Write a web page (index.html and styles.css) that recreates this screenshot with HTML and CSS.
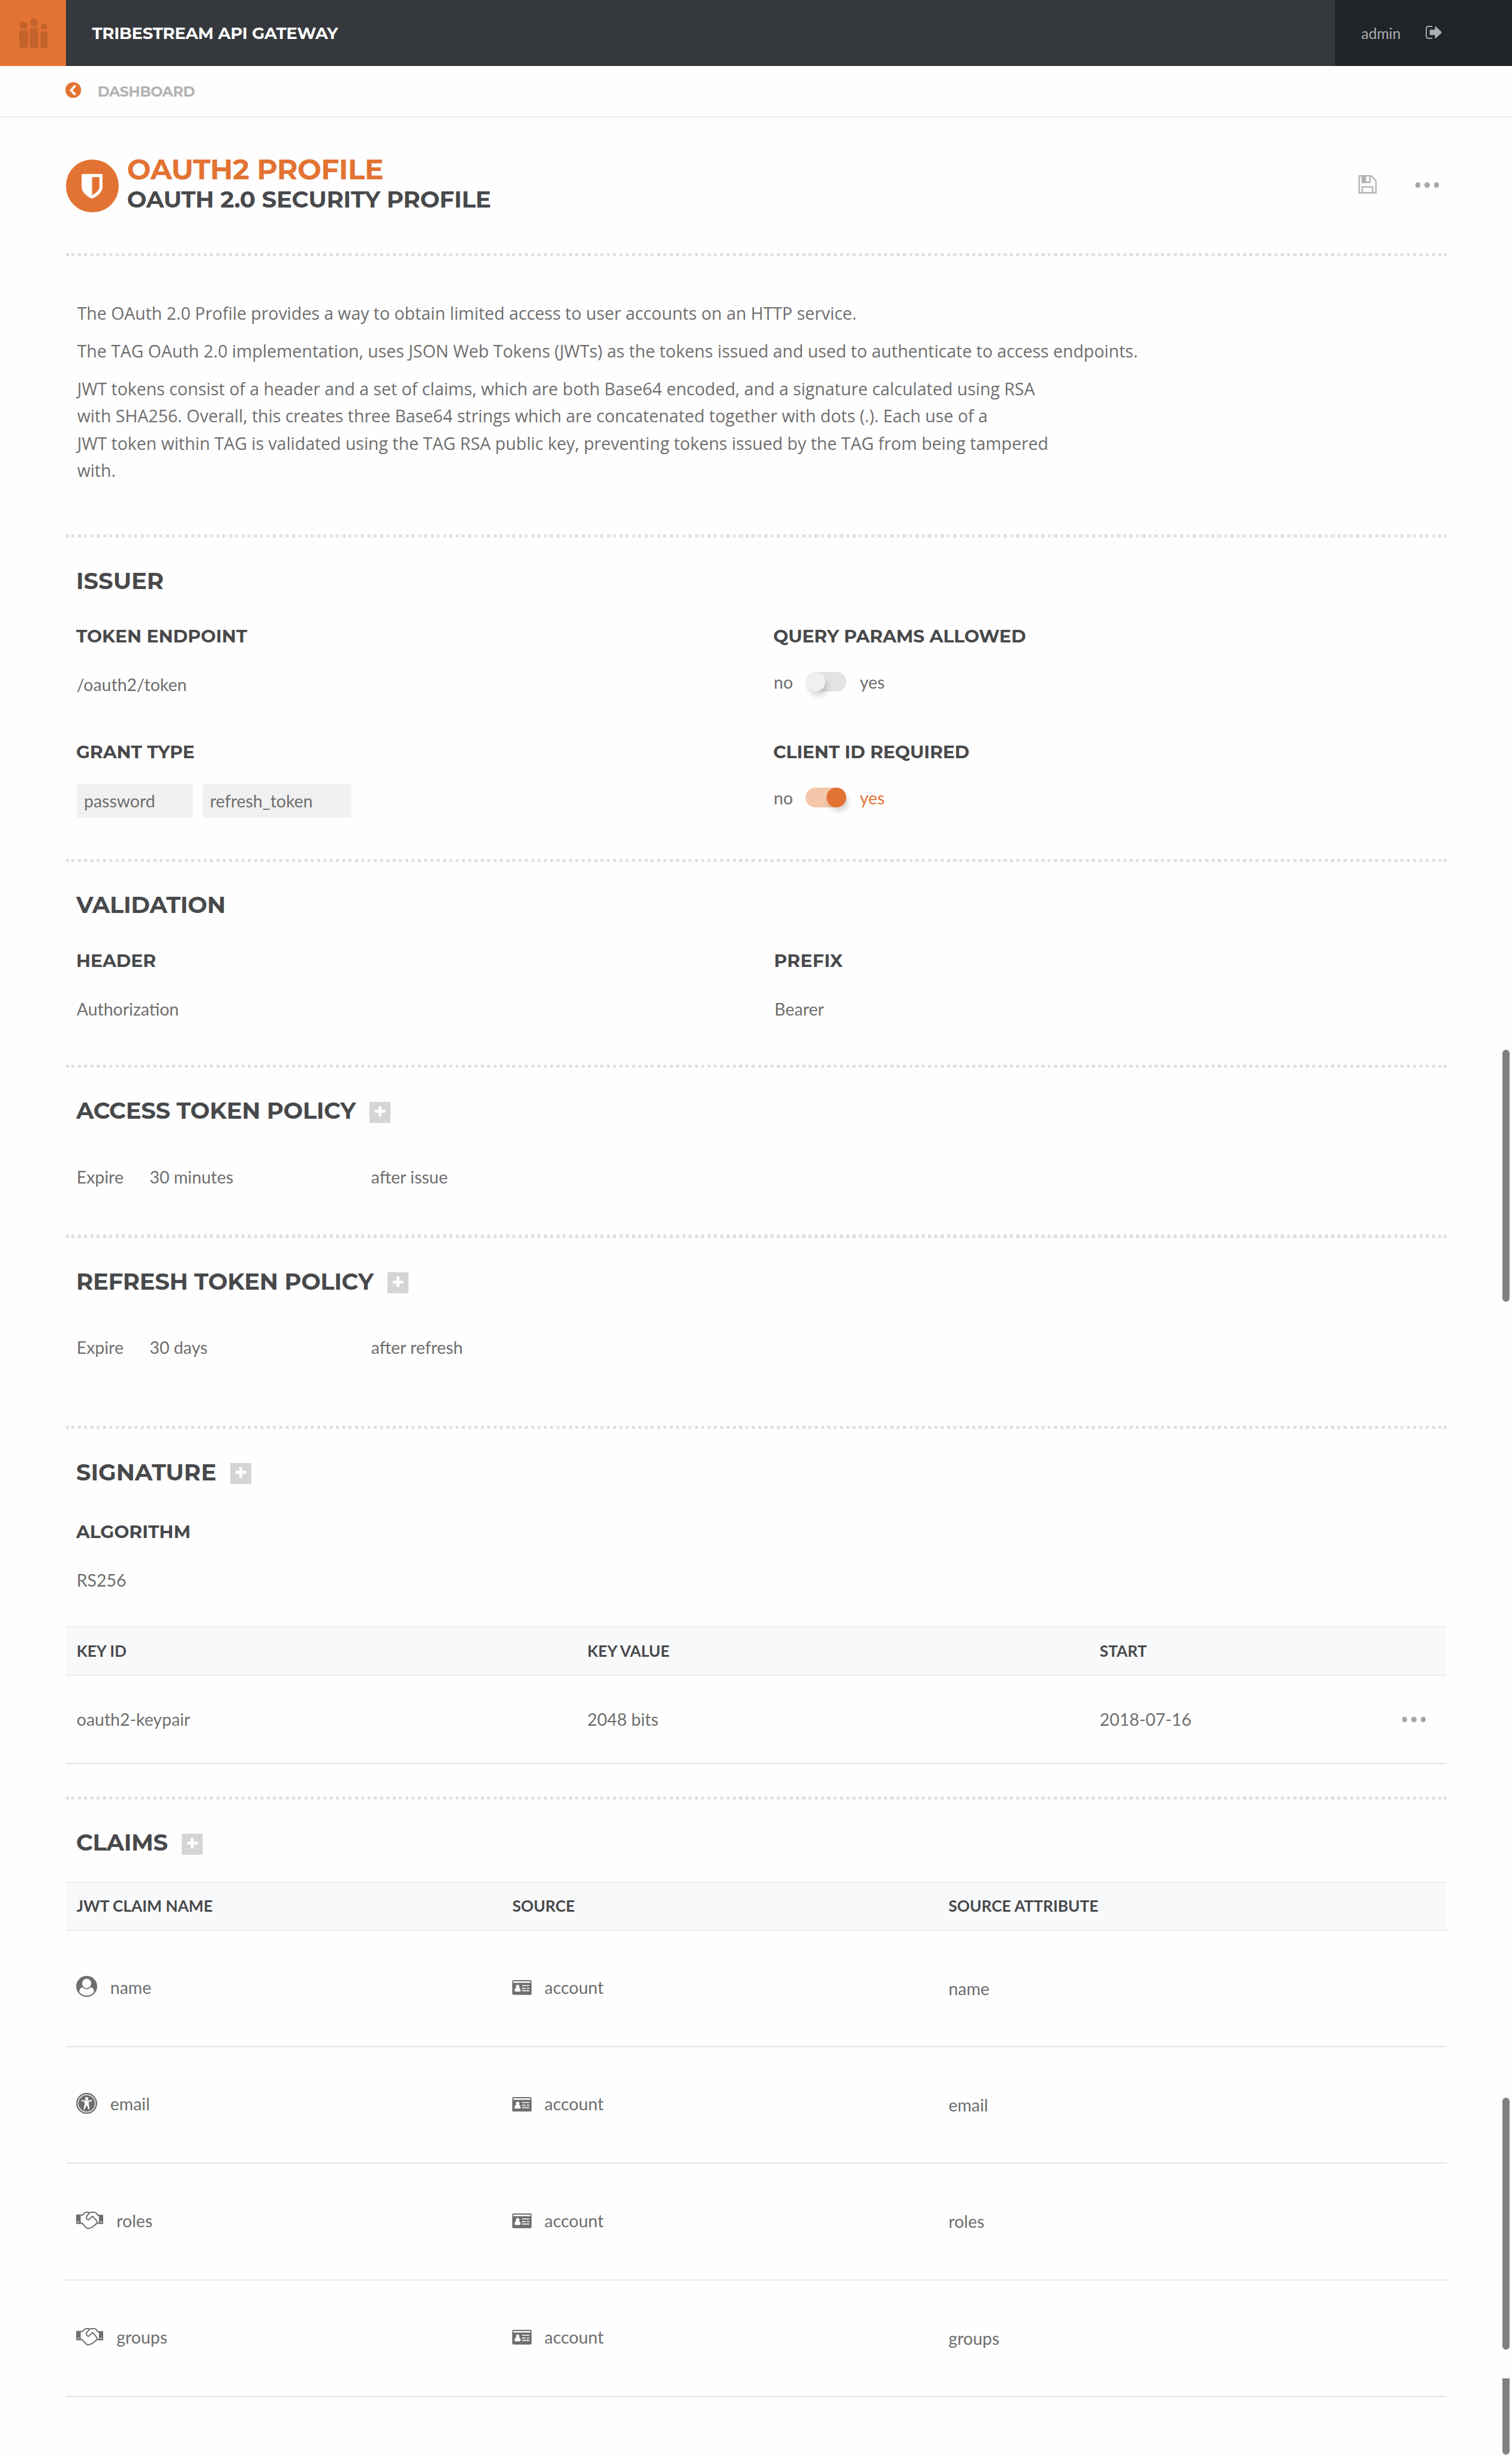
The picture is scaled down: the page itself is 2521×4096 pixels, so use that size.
FILE: index.html
```html
<!DOCTYPE html>
<html lang="en">
<head>
<meta charset="utf-8">
<title>Tribestream API Gateway</title>
<link rel="stylesheet" href="styles.css">
</head>
<body>
<svg class="defs" aria-hidden="true">
  <symbol id="i-card" viewBox="0 0 112 86">
    <path fill="currentColor" fill-rule="evenodd" d="M8 0h96a8 8 0 0 1 8 8v70a8 8 0 0 1-8 8H8a8 8 0 0 1-8-8V8a8 8 0 0 1 8-8zM6 7v9h99V7zM56 29v6h42v-6zM56 44v6h21v-6zM84 44v6h14v-6zM56 58v6h42v-6zM31 26a10 11 0 0 0-8 18c-8 3-10 9-10 17q0 6 6 6h23q6 0 6-6c0-8-2-14-9-17a10 11 0 0 0-8-18z"/>
  </symbol>
  <symbol id="i-user" viewBox="0 0 120 120">
    <circle cx="60" cy="60" r="60" fill="currentColor"/>
    <ellipse cx="60" cy="43" rx="26" ry="27" fill="#fefefe"/>
    <path fill="#fefefe" d="M18 92C18 78 24 66 36 65C50 79 70 79 84 65C96 66 102 78 102 92A53 53 0 0 1 18 92z"/>
  </symbol>
  <symbol id="i-access" viewBox="0 0 120 120">
    <circle cx="60" cy="60" r="60" fill="currentColor"/>
    <circle cx="60" cy="60" r="49.5" fill="none" stroke="#fefefe" stroke-width="4.5"/>
    <circle cx="60" cy="33" r="9" fill="#fefefe"/>
    <path fill="#fefefe" d="M32 41L52 44H68L88 41Q91 41 91 44Q91 46 88 47L72 51V66L77 91Q77 95 74 95Q71 95 70 92L62 73H58L50 92Q49 95 46 95Q43 95 43 91L48 66V51L32 47Q29 46 29 44Q29 41 32 41z"/>
  </symbol>
  <symbol id="i-hands" viewBox="0 0 156 100">
    <path fill="currentColor" fill-rule="evenodd" d="M3 16H26V70H3Q0 70 0 67V19Q0 16 3 16zM12 54a4 4 0 1 0 .1 0zM130 18H153Q156 18 156 21V67Q156 70 153 70H130zM142 54a4 4 0 1 0 .1 0z"/>
    <path fill="none" stroke="currentColor" stroke-width="7" stroke-linejoin="round" stroke-linecap="round" d="M26 20H36L47 8Q52 3.500 60 3.500H68L77 7M26 66H34L52 86Q58 95 68 96Q78 96 86 90Q95 90 99 83Q106 80 109 74Q114 71 119 66H130M130 21H125L115 9Q110 3.500 102 3.500H88Q80 3.500 75 9L63 22Q55 34 61 42Q68 51 77 43L82 36L94 26L113 47Q121 57 119 66"/>
  </symbol>
</svg>

<header class="topbar">
  <div class="logo">
    <svg viewBox="0 0 54 56"><g fill="#c2632b"><rect x=".6" y="6" width="15.400" height="14" rx="7"/><rect x="0" y="22" width="17" height="34" rx="4.500"/><rect x="20.800" y="0" width="15" height="15.300" rx="7.500"/><rect x="20.300" y="17.700" width="16" height="38.300" rx="4.500"/><rect x="41" y="9" width="12.300" height="12" rx="6"/><rect x="40.400" y="24" width="13.600" height="32" rx="4.500"/></g></svg>
  </div>
  <div class="brand">TRIBESTREAM API GATEWAY</div>
  <div class="user">
    <span>admin</span>
    <svg class="signout" viewBox="0 0 92 75"><path fill="none" stroke="#acadaf" stroke-width="6.500" stroke-linecap="round" d="M36 3.500H18Q3.500 3.500 3.500 18V57Q3.500 71.500 18 71.500H36"/><path fill="#acadaf" d="M27 22H53V7Q54 1 59 4L90 34Q93 37 90 41L59 71Q54 74 53 68V53H27Q23 53 23 49V26Q23 22 27 22z"/></svg>
  </div>
</header>

<nav class="crumbs">
  <svg class="back" viewBox="0 0 30 30"><circle cx="15" cy="15" r="15" fill="#e37333"/><path fill="none" stroke="#fefefe" stroke-width="4.200" d="M19 6.500L11 15.200L19 24"/></svg>
  <span>DASHBOARD</span>
</nav>

<main class="content">
  <div class="page-head">
    <div class="badge"><svg viewBox="0 0 40 47"><path fill="#fefefe" fill-rule="evenodd" d="M2 0H38Q40 0 40 2V24C40 35 30 43 20 47C10 43 0 35 0 24V2Q0 0 2 0zM20 6V40.500C28 36 34 31 34 24V6z"/></svg></div>
    <div class="titles">
      <h1>OAUTH2 PROFILE</h1>
      <div class="subtitle">OAUTH 2.0 SECURITY PROFILE</div>
    </div>
    <div class="actions">
      <svg class="save" viewBox="0 0 104 105"><g fill="none" stroke="#b3b3b3" stroke-width="8" stroke-linejoin="round"><path d="M4 4H72L100 32V101H4z"/><path d="M21 4V41H66V4M21 101V67H81V101"/></g><path fill="#b3b3b3" d="M17 4H44V44H17z"/></svg>
      <span class="dots"><i></i><i></i><i></i></span>
    </div>
  </div>
  <div class="rule"></div>

  <section class="about">
    <p>The OAuth 2.0 Profile provides a way to obtain limited access to user accounts on an HTTP service.</p>
    <p>The TAG OAuth 2.0 implementation, uses JSON Web Tokens (JWTs) as the tokens issued and used to authenticate to access endpoints.</p>
    <p>JWT tokens consist of a header and a set of claims, which are both Base64 encoded, and a signature calculated using RSA<br>with SHA256. Overall, this creates three Base64 strings which are concatenated together with dots (.). Each use of a<br>JWT token within TAG is validated using the TAG RSA public key, preventing tokens issued by the TAG from being tampered<br>with.</p>
  </section>
  <div class="rule"></div>

  <section class="issuer">
    <h2>ISSUER</h2>
    <div class="fields">
      <div class="field"><h3>TOKEN ENDPOINT</h3><div class="value">/oauth2/token</div></div>
      <div class="field"><h3 class="snug">QUERY PARAMS ALLOWED</h3>
        <div class="switch"><span class="no">no</span><span class="toggle"><i></i></span><span>yes</span></div></div>
      <div class="field"><h3>GRANT TYPE</h3>
        <div class="tags"><span class="tag">password</span><span class="tag">refresh_token</span></div></div>
      <div class="field"><h3 class="snug">CLIENT ID REQUIRED</h3>
        <div class="switch on"><span class="no">no</span><span class="toggle"><i></i></span><span class="yes">yes</span></div></div>
    </div>
  </section>
  <div class="rule"></div>

  <section class="validation">
    <h2 class="snug">VALIDATION</h2>
    <div class="fields">
      <div class="field"><h3>HEADER</h3><div class="value">Authorization</div></div>
      <div class="field prefix"><h3 class="open">PREFIX</h3><div class="value">Bearer</div></div>
    </div>
  </section>
  <div class="rule"></div>

  <section class="access">
    <h2 class="snug">ACCESS TOKEN POLICY <span class="plus"></span></h2>
    <div class="policy"><span>Expire</span><span>30 minutes</span><span>after issue</span></div>
  </section>
  <div class="rule"></div>

  <section class="refresh">
    <h2 class="snug">REFRESH TOKEN POLICY <span class="plus"></span></h2>
    <div class="policy"><span>Expire</span><span>30 days</span><span>after refresh</span></div>
  </section>
  <div class="rule"></div>

  <section class="signature">
    <h2>SIGNATURE <span class="plus"></span></h2>
    <div class="field algorithm"><h3>ALGORITHM</h3><div class="value">RS256</div></div>
    <div class="table keys">
      <div class="thead"><span>KEY ID</span><span>KEY VALUE</span><span>START</span></div>
      <div class="row"><span>oauth2-keypair</span><span>2048 bits</span><span class="last">2018-07-16<span class="dots"><i></i><i></i><i></i></span></span></div>
    </div>
  </section>
  <div class="rule"></div>

  <section class="claims">
    <h2 class="snug">CLAIMS <span class="plus"></span></h2>
    <div class="table">
      <div class="thead"><span>JWT CLAIM NAME</span><span>SOURCE</span><span>SOURCE ATTRIBUTE</span></div>
      <div class="row"><span><svg class="round"><use href="#i-user"/></svg>name</span><span><svg class="card"><use href="#i-card"/></svg>account</span><span class="attr">name</span></div>
      <div class="row"><span><svg class="round"><use href="#i-access"/></svg>email</span><span><svg class="card"><use href="#i-card"/></svg>account</span><span class="attr">email</span></div>
      <div class="row"><span><svg class="hands"><use href="#i-hands"/></svg>roles</span><span><svg class="card"><use href="#i-card"/></svg>account</span><span class="attr">roles</span></div>
      <div class="row"><span><svg class="hands"><use href="#i-hands"/></svg>groups</span><span><svg class="card"><use href="#i-card"/></svg>account</span><span class="attr">groups</span></div>
    </div>
  </section>
</main>

<div class="scroll first"></div>
<div class="scroll second"></div>
<div class="scroll third"></div>
</body>
</html>
```
FILE: styles.css
```css
* { box-sizing: border-box; }
html { font-size: 8.752px; }
body {
  position: relative;
  margin: 0;
  height: 468rem;
  overflow: hidden;
  background: #fefefe;
  color: #6e6e6e;
  font: 3.25rem/4rem Lato, "Open Sans", sans-serif;
}
h1, h2, h3, p { margin: 0; }
svg { display: block; flex: none; }
.defs { position: absolute; width: 0; height: 0; }

/* top bar */
.topbar { display: flex; align-items: center; height: 12.6rem; background: #35383c; }
.logo { display: flex; align-items: center; justify-content: center; width: 12.6rem; height: 100%; background: #e37333; }
.logo svg { width: 5.4rem; height: 5.6rem; }
.brand, .crumbs, h1, h2, h3, .subtitle { font-family: Montserrat, Inter, sans-serif; font-weight: 700; white-space: nowrap; }
.brand { width: 241.8rem; padding-left: 4.95rem; font-size: 3.15rem; letter-spacing: -.04rem; color: #fefefe; }
.user { display: flex; align-items: center; flex: 1; height: 100%; padding-left: 4.95rem; background: #202328; color: #acadaf; font-size: 2.8rem; }
.signout { width: 3.07rem; height: 2.5rem; margin: -.3rem 0 0 4.75rem; }

/* breadcrumbs */
.crumbs { display: flex; align-items: center; height: 9.8rem; padding-left: 12.5rem; border-bottom: 2px solid #ededed; color: #b3b3b3; font-size: 2.75rem; letter-spacing: -.07rem; }
.back { width: 3rem; height: 3rem; margin: -.5rem 3.1rem 0 0; }

.content { width: 263rem; margin-left: 12.6rem; }
.rule {
  height: .6rem;
  background:
    linear-gradient(#e0e0e0, #e0e0e0) 0 0 / .6rem 100% no-repeat,
    linear-gradient(#e0e0e0, #e0e0e0) 100% 0 / .6rem 100% no-repeat,
    repeating-linear-gradient(90deg, #e0e0e0 0 .6rem, transparent .6rem 1.2rem) 1rem 0 / 261rem 100% no-repeat;
}

/* page heading */
.page-head { display: flex; align-items: flex-start; height: 25.8rem; padding-top: 8rem; }
.badge { display: flex; justify-content: center; align-items: center; width: 10rem; height: 10rem; border-radius: 50%; background: #e37333; }
.badge svg { width: 4rem; height: 4.7rem; margin: .1rem 0 0 -.1rem; }
.titles { padding-left: 1.6rem; margin-top: -1.1rem; }
h1 { font-size: 5.4rem; line-height: 6rem; letter-spacing: -.06rem; color: #e37333; }
.subtitle { font-size: 4.42rem; line-height: 5.6rem; margin-top: -.1rem; letter-spacing: -.03rem; color: #48494b; }
.actions { display: flex; align-items: center; height: 9.7rem; margin-left: auto; padding-right: 1.5rem; }
.save { width: 3.47rem; height: 3.5rem; margin-right: 7.35rem; margin-top: -.2rem; }
.dots { display: flex; gap: .8rem; }
.dots i { width: .95rem; height: .95rem; border-radius: 50%; background: #a5a6a8; }

.about { height: 53rem; padding: 8.3rem 2.1rem 0; font: 3.252rem/5.2rem "Open Sans", sans-serif; }
.about p { margin-bottom: 2rem; white-space: nowrap; }

/* sections */
h2 { display: flex; align-items: center; height: 6rem; padding-left: 1.9rem; font-size: 4.4rem; line-height: 6rem; color: #48494b; }
h3 { margin-left: -.1rem; font-size: 3.4rem; line-height: 4rem; color: #48494b; }
h2.snug { letter-spacing: -.035rem; }
h3.snug { letter-spacing: -.015rem; }
h3.open { letter-spacing: .04rem; }
.issuer, .validation { padding-top: 5.3rem; }
.issuer { height: 61.2rem; }
.validation { height: 38.6rem; }
.fields { display: grid; grid-template-columns: 132.8rem 1fr; grid-auto-rows: 22rem; padding: 5.5rem 0 0 2rem; }
.prefix { padding-left: .15rem; }
.value { margin-top: 5.2rem; }
.switch { display: flex; align-items: center; margin-top: 4.8rem; height: 4rem; }
.no { width: 6rem; }
.toggle { width: 7.8rem; height: 3.8rem; margin: -.2rem 2.6rem 0 0; border-radius: 1.9rem; background: #e3e3e3; }
.toggle i { display: block; width: 3.8rem; height: 3.8rem; border-radius: 50%; background: #f1eff0; box-shadow: .5rem .9rem .9rem rgba(0, 0, 0, .13); }
.on .toggle { background: #f4c6aa; }
.on .toggle i { margin-left: 4rem; background: #e37333; }
.yes { color: #e37333; }
.tags { display: flex; gap: 1.8rem; margin-top: 4.2rem; }
.tag { height: 6.4rem; line-height: 6.4rem; padding-left: 1.4rem; border-radius: .5rem; background: #f1f1f1; }
.tag:nth-child(1) { width: 22.2rem; }
.tag:nth-child(2) { width: 28.4rem; }

.plus { width: 4rem; height: 4rem; margin: .4rem 0 0 2.65rem; background:
  linear-gradient(#fefefe, #fefefe) 50% 45% / 2rem .6rem no-repeat,
  linear-gradient(#fefefe, #fefefe) 50% 40% / .6rem 2rem no-repeat, #d5d5d5; }
.access { height: 31.8rem; padding-top: 5.3rem; }
.refresh { height: 35.8rem; padding-top: 5.4rem; }
.policy { display: grid; grid-template-columns: 13.9rem 42.2rem 1fr; padding: 7.5rem 0 0 2rem; }

.signature { height: 70rem; padding-top: 5.3rem; }
.algorithm { padding: 6.3rem 0 6.8rem 2rem; }
.claims { padding-top: 5.3rem; }
.claims .table { margin-top: 4.3rem; }

/* tables */
.thead, .row { display: grid; grid-template-columns: 83rem 83.1rem 1fr; align-items: center; }
.keys .thead, .keys .row { grid-template-columns: 97.3rem 97.6rem 1fr; }
.thead { height: 9.4rem; border: solid #eaedf0; border-width: 2px 0; background: #f8f9fb; color: #48494b; font-size: 3rem; font-weight: 700; }
.row { height: 22.2rem; border-bottom: 2px solid #e5e5e5; }
.keys .row { height: 16.8rem; padding-top: .1rem; }
.thead > span, .row > span { display: flex; align-items: center; padding-left: 2rem; }
.claims .row > span { position: relative; top: -.15rem; }
.claims .row > .attr { top: .05rem; }
.row .dots { margin-left: auto; padding-right: 4rem; }
.round { width: 4rem; height: 4rem; margin: -.4rem 2.5rem 0 -.1rem; }
.card { width: 3.73rem; height: 2.84rem; margin-right: 2.4rem; }
.hands { width: 5.2rem; height: 3.33rem; margin: -.2rem 2.5rem 0 -.1rem; }

/* scroll thumbs over the right edge */
.scroll { position: absolute; right: .45rem; width: 1.4rem; background: #808080; border-radius: .7rem; }
.first { top: 200rem; height: 48rem; }
.second { top: 399.6rem; height: 48rem; }
.third { top: 453rem; height: 14.6rem; border-radius: 0 0 .7rem .7rem; }
```
